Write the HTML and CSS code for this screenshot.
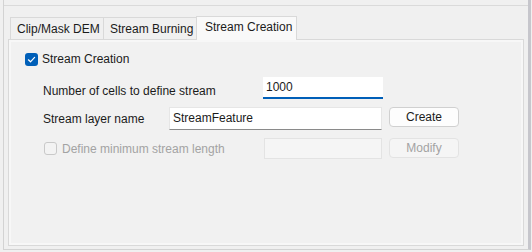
FILE: index.html
```html
<!DOCTYPE html>
<html>
<head>
<meta charset="utf-8">
<link rel="stylesheet" href="styles.css">
</head>
<body>
<div class="window">
  <div class="topbar"></div>
  <div class="tabstrip">
    <div class="tab">Clip/Mask DEM</div>
    <div class="tab">Stream Burning</div>
    <div class="tab active">Stream Creation</div>
  </div>
  <div class="panel">
    <div class="check-row">
      <span class="cb checked"><svg width="13" height="13" viewBox="0 0 13 13"><path d="M3.4 6.8 L5.5 8.8 L9.6 4.4" fill="none" stroke="#fff" stroke-width="1.2" stroke-linecap="round" stroke-linejoin="round"/></svg></span>
      <span class="cb-label">Stream Creation</span>
    </div>
    <div class="rows">
      <div class="row r1">
        <span class="label l1">Number of cells to define stream</span>
        <div class="input focus">1000</div>
      </div>
      <div class="row r2">
        <span class="label l2">Stream layer name</span>
        <div class="input normal">StreamFeature</div>
        <div class="btn">Create</div>
      </div>
      <div class="row r3">
        <span class="label l3 disabled"><span class="cb off"></span>Define minimum stream length</span>
        <div class="input dis"></div>
        <div class="btn dis">Modify</div>
      </div>
    </div>
  </div>
</div>
</body>
</html>
```
FILE: styles.css
```css
html, body {
  margin: 0;
  padding: 0;
  background: #f0f0f0;
  font-family: "Segoe UI", "Liberation Sans", Arial, sans-serif;
  font-size: 12px;
  color: #1b1b1b;
}
.window {
  margin-left: 3px;
  width: 524px;
  height: 249px;
  border-left: 1px solid #d3d3d3;
  border-right: 3px solid #c6c6cc;
  border-bottom: 1px solid #d3d3d3;
  display: flex;
  flex-direction: column;
}
.topbar {
  height: 5px;
  border-bottom: 1px solid #dadada;
  flex: none;
}
.tabstrip {
  margin-top: 10px;
  padding-left: 6px;
  display: flex;
  align-items: flex-end;
  height: 23px;
  position: relative;
  z-index: 1;
  flex: none;
}
.tab {
  height: 22px;
  box-sizing: border-box;
  border: 1px solid #d9d9d9;
  border-bottom: none;
  background: #f0f0f0;
  padding: 0 6px;
  line-height: 22px;
  width: 94px;
  margin-right: -1px;
  padding-left: 6px;
  white-space: nowrap;
}
.tab.active {
  height: 24px;
  width: 101px;
  margin-bottom: -1px;
  background: #f9f9f9;
  line-height: 20px;
  padding-left: 8px;
}
.panel {
  margin: 0 4px 3px 4px;
  flex: 1;
  border: 1px solid #d9d9d9;
  box-shadow: inset 0 0 0 2px #f7f7f7;
  background: #f1f1f1;
  padding: 12px 0 0 16px;
}
.check-row {
  display: flex;
  align-items: center;
  height: 14px;
}
.cb {
  width: 13px;
  height: 13px;
  box-sizing: border-box;
  border-radius: 3px;
  display: inline-block;
  flex: none;
}
.cb.checked {
  background: #005fb8;
}
.cb.checked svg { display: block; }
.cb.off {
  border: 1px solid #c9c9c9;
  background: #f3f3f3;
  margin-right: 5px;
  margin-left: 1px;
}
.cb-label {
  margin-left: 4px;
  line-height: 14px;
}
.rows {
  margin-left: 18px;
  margin-top: 11px;
  display: flex;
  flex-direction: column;
  gap: 8px;
}
.row {
  display: flex;
  align-items: center;
}
.label {
  flex: none;
  display: flex;
  align-items: center;
}
.l1 { width: 220px; padding-top: 5px; }
.l2 { width: 126px; }
.l3 { width: 221px; }
.disabled { color: #a3a3a3; }
.input {
  box-sizing: border-box;
  background: #fff;
  padding-left: 3px;
  white-space: nowrap;
}
.input.focus {
  width: 120px;
  height: 22px;
  border-bottom: 2px solid #005fb8;
  line-height: 20px;
}
.input.normal {
  width: 213px;
  height: 23px;
  border: 1px solid #e6e6e6;
  border-bottom: 1px solid #8a8a8a;
  line-height: 20px;
}
.input.dis {
  width: 118px;
  height: 21px;
  border: 1px solid #e3e3e3;
  background: #f5f5f5;
}
.btn {
  margin-left: 7px;
  width: 70px;
  box-sizing: border-box;
  height: 20px;
  border: 1px solid #d0d0d0;
  border-radius: 4px;
  background: #fdfdfd;
  text-align: center;
  line-height: 18px;
  align-self: flex-start;
}
.btn.dis {
  background: #f5f5f5;
  border-color: #e3e3e3;
  color: #a3a3a3;
}
```
